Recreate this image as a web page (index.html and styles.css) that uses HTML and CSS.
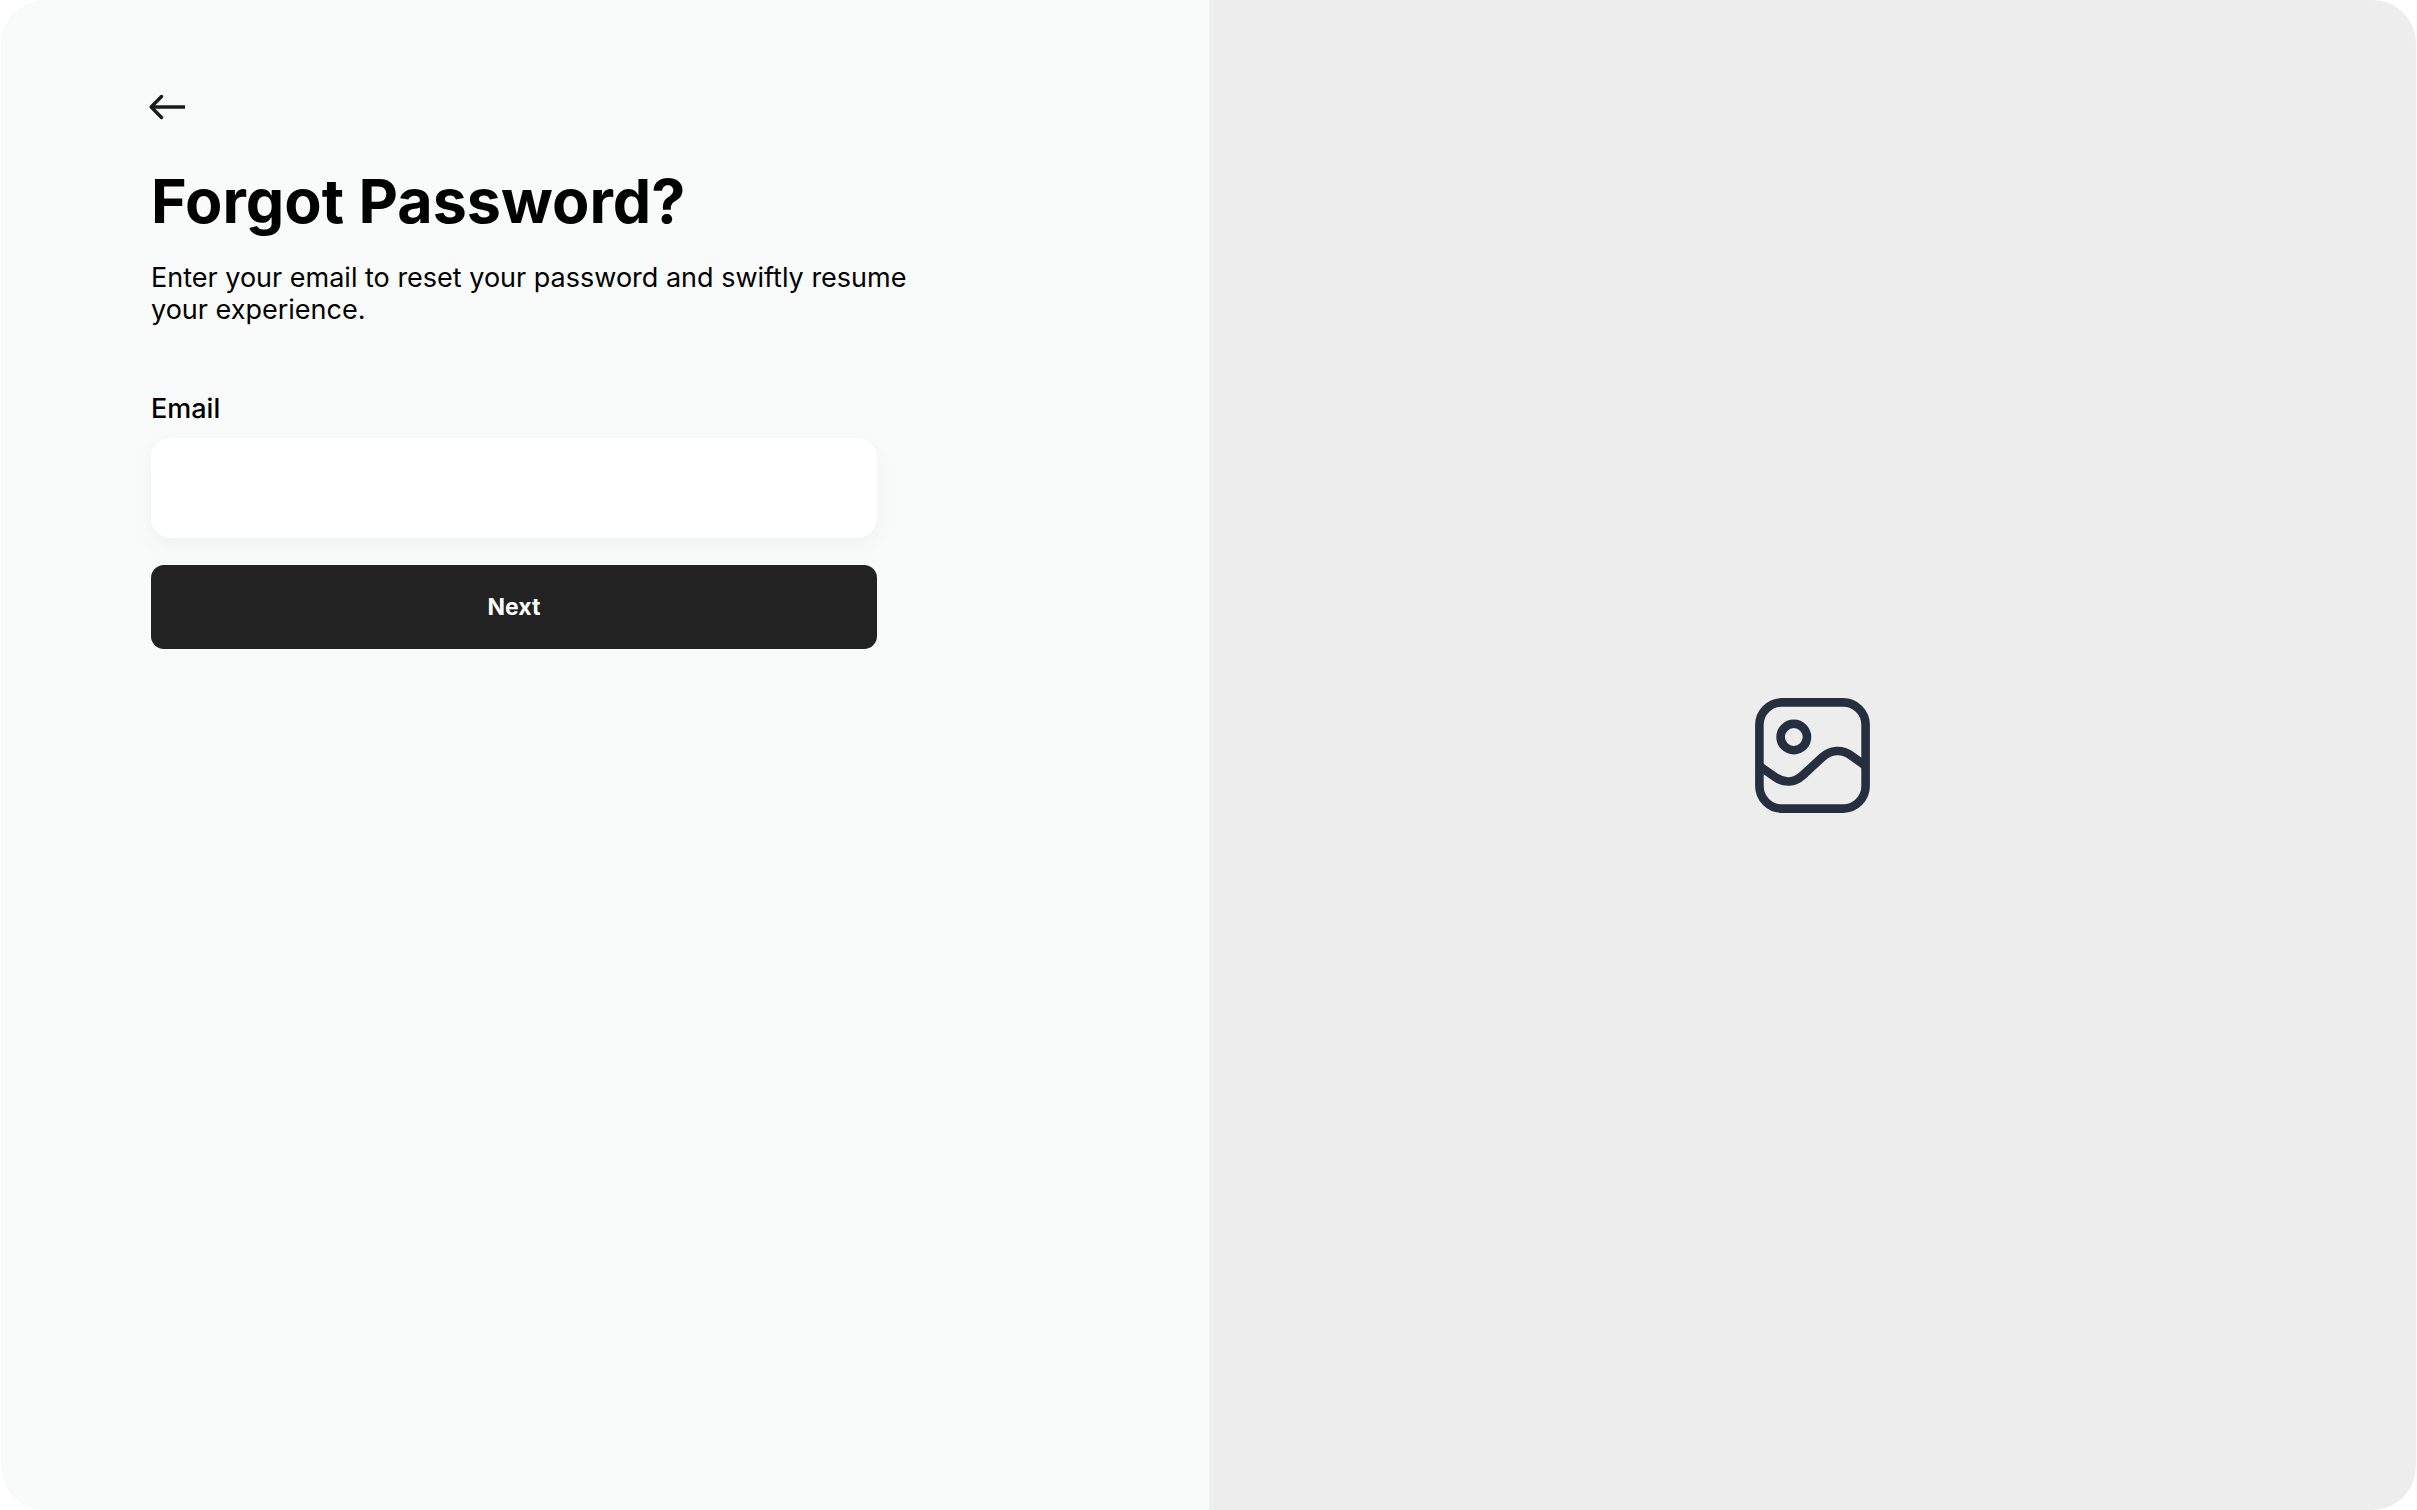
FILE: index.html
```html
<!DOCTYPE html>
<html lang="en">
<head>
  <meta charset="utf-8">
  <meta name="viewport" content="width=device-width, initial-scale=1">
  <title>Forgot Password</title>
  <link rel="stylesheet" href="styles.css">
</head>
<body>
  <main class="screen">
    <section class="panel">
      <a class="back" href="#" aria-label="Back">
        <svg class="back-icon" viewBox="0 0 38 28" fill="none" stroke="currentColor" stroke-width="3.4" stroke-linejoin="round">
          <path d="M2.5 14H36"/>
          <path d="M12.5 3.5L2.2 14L12.5 24.5" stroke-linecap="round"/>
        </svg>
      </a>
      <h1 class="title">Forgot Password?</h1>
      <p class="intro">Enter your email to reset your password and swiftly resume your experience.</p>
      <form class="form">
        <label class="label" for="email">Email</label>
        <input class="input" id="email" name="email" type="email">
        <button class="button" type="submit">Next</button>
      </form>
    </section>
    <aside class="media">
      <svg class="media-icon" viewBox="0 0 115 115" fill="none" stroke="currentColor" stroke-width="8.6" aria-hidden="true">
        <rect x="4.4" y="4.4" width="106.2" height="106.2" rx="22.5"/>
        <circle cx="38.8" cy="39" r="13.2"/>
        <path d="M5 68.5L20 79C29 85.5 39.5 84.8 47.5 77.5L67 59.5C75.5 51.5 87 50.8 96 57.5L110 67.5"/>
      </svg>
    </aside>
  </main>
</body>
</html>
```
FILE: styles.css
```css
* {
  box-sizing: border-box;
}

body {
  margin: 0;
  background: #fff;
  color: #000;
  font-family: Inter, "Liberation Sans", sans-serif;
}

.screen {
  display: grid;
  grid-template-columns: 1fr 1fr;
  min-height: 100vh;
  padding: 0 1px;
  background: #fff;
}

.panel {
  padding: 93px 150px;
  border-radius: 44px 0 0 44px;
  background: #f9fbfa;
}

.back {
  display: block;
  width: 38px;
  margin-left: -2px;
  color: #1a1a1a;
}

.back-icon {
  display: block;
  width: 38px;
  height: 28px;
}

.title {
  margin: 44px 0 0;
  font-size: 61px;
  font-weight: 700;
  line-height: 72px;
}

.intro {
  max-width: 780px;
  margin: 25px 0 0;
  font-size: 27px;
  line-height: 32px;
}

.form {
  display: flex;
  flex-direction: column;
  width: 80%;
  margin-top: 67px;
}

.label {
  font-size: 27px;
  font-weight: 500;
  line-height: 32px;
}

.input {
  height: 100px;
  margin-top: 13px;
  padding: 0 28px;
  border: 0;
  border-radius: 20px;
  background: #fff;
  box-shadow: 0 8px 22px rgba(0, 0, 0, 0.045);
  font: inherit;
  font-size: 27px;
}

.button {
  height: 84px;
  margin-top: 27px;
  border: 0;
  border-radius: 13px;
  background: #222;
  color: #fff;
  font: inherit;
  font-size: 23px;
  font-weight: 700;
}

.media {
  display: grid;
  place-items: center;
  border-radius: 0 44px 44px 0;
  background: #ededed;
  color: #262f3f;
}

.media-icon {
  width: 115px;
  height: 115px;
}
```
